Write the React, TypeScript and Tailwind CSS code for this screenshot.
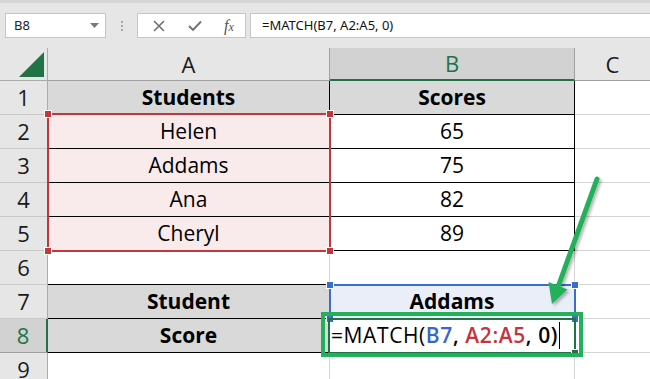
import type { ReactNode } from 'react';

const cellFont = { fontFamily: '"Open Sans", "Noto Sans", sans-serif' };
const uiFont = { fontFamily: '"Noto Sans", "Open Sans", sans-serif' };

type CellProps = {
  className?: string;
  children?: ReactNode;
};

const RowHead = ({ n, active = false }: { n: number; active?: boolean }) => (
  <div
    className={`w-[48px] shrink-0 h-full flex items-center justify-center text-[22px] box-border border-b ${
      active
        ? 'bg-[#d2d2d2] text-[#217346] border-r-2 border-r-[#217346] border-b-[#9f9f9f]'
        : 'bg-[#e6e6e6] text-[#1a1a1a] border-r border-r-[#ababab] border-b-[#c9c9c9]'
    }`}
  >
    {n}
  </div>
);

const Cell = ({ className = '', children }: CellProps) => (
  <div
    className={`h-full box-border flex items-center justify-center text-[21px] text-black border-r border-b ${className}`}
  >
    {children}
  </div>
);

const Row = ({ n, active, children }: { n: number; active?: boolean; children: ReactNode }) => (
  <div className="flex h-[34px]">
    <RowHead n={n} active={active} />
    {children}
  </div>
);

const colA = 'w-[282px] shrink-0';
const colB = 'w-[245px] shrink-0';
const colC = 'flex-1 border-r-0 border-b-[#d4d4d4]';
const black = 'border-r-black border-b-black';

const App = () => {
  return (
    <div className="relative w-[650px] h-[379px] overflow-hidden bg-white" style={cellFont}>
      {/* formula bar */}
      <div className="h-[48px] bg-[#e6e6e6] border-t-[3px] border-t-[#d6d6d6] flex items-center pl-[5px] gap-0" style={uiFont}>
        <div className="w-[101px] h-[25px] bg-white border border-[#c6c6c6] flex items-center justify-between pl-[8px] pr-[6px] text-[13px] text-[#222]">
          <span>B8</span>
          <svg width="9" height="5" viewBox="0 0 9 5">
            <path d="M0 0 L9 0 L4.5 5 Z" fill="#7a7a7a" />
          </svg>
        </div>
        <div className="w-[31px] flex flex-col items-center gap-[2px]">
          <span className="w-[2px] h-[2px] bg-[#a8a8a8]" />
          <span className="w-[2px] h-[2px] bg-[#a8a8a8]" />
          <span className="w-[2px] h-[2px] bg-[#a8a8a8]" />
        </div>
        <div className="w-[109px] h-[25px] bg-white border border-[#c6c6c6] flex items-center justify-around pl-[4px] text-[#6e6e6e]">
          <svg width="12" height="12" viewBox="0 0 12 12">
            <path d="M1 1 L11 11 M11 1 L1 11" stroke="#707070" strokeWidth="1.6" fill="none" />
          </svg>
          <svg width="14" height="12" viewBox="0 0 14 12">
            <path d="M1 6 L5 10 L13 1.5" stroke="#707070" strokeWidth="1.9" fill="none" />
          </svg>
          <span className="text-[16px] italic text-[#555]" style={{ fontFamily: '"Liberation Serif", serif' }}>
            f<span className="text-[12px]">x</span>
          </span>
        </div>
        <div className="ml-[4px] flex-1 h-[25px] bg-white border border-[#c6c6c6] border-r-0 flex items-center pl-[11px] text-[13px] text-[#111]">
          =MATCH(B7, A2:A5, 0)
        </div>
      </div>

      {/* column headers */}
      <div className="flex h-[33px]">
        <div className="w-[48px] shrink-0 h-full bg-[#e6e6e6] border-r border-b border-[#ababab] box-border flex items-end justify-end pr-[3px] pb-[3px]">
          <svg width="25" height="25" viewBox="0 0 25 25">
            <path d="M25 0 L25 25 L0 25 Z" fill="#217346" />
          </svg>
        </div>
        <div className={`${colA} h-full bg-[#e6e6e6] border-r border-r-[#a0a0a0] border-b border-b-[#9f9f9f] box-border flex items-center justify-center text-[22px] text-[#1a1a1a]`}>
          A
        </div>
        <div className={`${colB} h-full bg-[#d2d2d2] border-r border-r-[#a0a0a0] border-b-2 border-b-[#217346] box-border flex items-center justify-center text-[22px] text-[#217346]`}>
          B
        </div>
        <div className="flex-1 h-full bg-[#e6e6e6] border-b border-b-[#9f9f9f] box-border flex items-center justify-center text-[22px] text-[#1a1a1a]">
          C
        </div>
      </div>

      {/* sheet rows */}
      <Row n={1}>
        <Cell className={`${colA} ${black} bg-[#d9d9d9] font-bold`}>Students</Cell>
        <Cell className={`${colB} ${black} bg-[#d9d9d9] font-bold`}>Scores</Cell>
        <Cell className={colC} />
      </Row>
      {[
        ['Helen', '65'],
        ['Addams', '75'],
        ['Ana', '82'],
        ['Cheryl', '89'],
      ].map(([name, score], i) => (
        <Row key={name} n={i + 2}>
          <Cell className={`${colA} ${black} bg-[#f9eaeb]`}>{name}</Cell>
          <Cell className={`${colB} ${black}`}>{score}</Cell>
          <Cell className={colC} />
        </Row>
      ))}
      <Row n={6}>
        <Cell className={`${colA} border-r-[#d4d4d4] border-b-black`} />
        <Cell className={`${colB} border-r-[#d4d4d4] border-b-[#d4d4d4]`} />
        <Cell className={colC} />
      </Row>
      <Row n={7}>
        <Cell className={`${colA} ${black} bg-[#d9d9d9] font-bold`}>Student</Cell>
        <Cell className={`${colB} border-r-[#d4d4d4] border-b-[#d4d4d4] bg-[#e9eef8] font-bold`}>Addams</Cell>
        <Cell className={colC} />
      </Row>
      <Row n={8} active>
        <Cell className={`${colA} ${black} bg-[#d9d9d9] font-bold`}>Score</Cell>
        <Cell className={`${colB} border-r-[#d4d4d4] border-b-[#d4d4d4] justify-start pl-[1px]`}>
          <span className="whitespace-nowrap tracking-[0.6px]">
            =MATCH(<span className="font-semibold text-[#3768c8]">B7</span>
            <span className="font-semibold">, </span>
            <span className="font-semibold text-[#c4353d]">A2:A5</span>
            <span className="font-semibold">, 0)</span>
          </span>
          <span className="ml-[1px] w-[1px] h-[27px] bg-black" />
        </Cell>
        <Cell className={colC} />
      </Row>
      <Row n={9}>
        <Cell className={`${colA} border-r-[#d4d4d4] border-b-[#d4d4d4]`} />
        <Cell className={`${colB} border-r-[#d4d4d4] border-b-[#d4d4d4]`} />
        <Cell className={colC} />
      </Row>

      {/* range highlight A2:A5 */}
      <div className="absolute left-[47px] top-[113px] w-[284px] h-[139px] border-2 border-[#c4353d] pointer-events-none">
        <span className="absolute -left-[4px] -top-[4px] w-[6px] h-[6px] bg-[#c4353d] outline outline-1 outline-white" />
        <span className="absolute -right-[4px] -top-[4px] w-[6px] h-[6px] bg-[#c4353d] outline outline-1 outline-white" />
        <span className="absolute -left-[4px] -bottom-[4px] w-[6px] h-[6px] bg-[#c4353d] outline outline-1 outline-white" />
        <span className="absolute -right-[4px] -bottom-[4px] w-[6px] h-[6px] bg-[#c4353d] outline outline-1 outline-white" />
      </div>

      {/* range highlight B7 */}
      <div className="absolute left-[329px] top-[284px] w-[247px] h-[36px] border-2 border-[#3a6dcc] pointer-events-none">
        <span className="absolute -left-[4px] -top-[4px] w-[6px] h-[6px] bg-[#3a6dcc] outline outline-1 outline-white" />
        <span className="absolute -right-[4px] -top-[4px] w-[6px] h-[6px] bg-[#3a6dcc] outline outline-1 outline-white" />
        <span className="absolute -left-[4px] -bottom-[4px] w-[6px] h-[6px] bg-[#3a6dcc] outline outline-1 outline-white" />
        <span className="absolute -right-[4px] -bottom-[4px] w-[6px] h-[6px] bg-[#3a6dcc] outline outline-1 outline-white" />
      </div>

      {/* active cell B8 */}
      <div className="absolute left-[328px] top-[318px] w-[248px] h-[36px] border-2 border-[#217346] pointer-events-none">
        <span className="absolute -right-[4px] -bottom-[4px] w-[6px] h-[6px] bg-[#217346] outline outline-1 outline-white" />
      </div>

      {/* green annotation box */}
      <div className="absolute left-[321px] top-[312px] w-[262px] h-[45px] border-[4px] border-[#22b15a] pointer-events-none" />

      {/* arrow */}
      <svg className="absolute left-0 top-0 pointer-events-none" width="650" height="379">
        <defs>
          <filter id="sh" x="-20%" y="-20%" width="140%" height="140%">
            <feDropShadow dx="2" dy="2" stdDeviation="1.5" floodColor="#000" floodOpacity="0.3" />
          </filter>
        </defs>
        <g filter="url(#sh)">
          <line x1="597" y1="179" x2="558" y2="287" stroke="#22b15a" strokeWidth="5" strokeLinecap="round" />
          <path d="M548.5 282 L567.5 289.5 L552 304 Z" fill="#22b15a" />
        </g>
      </svg>
    </div>
  );
};

export default App;
